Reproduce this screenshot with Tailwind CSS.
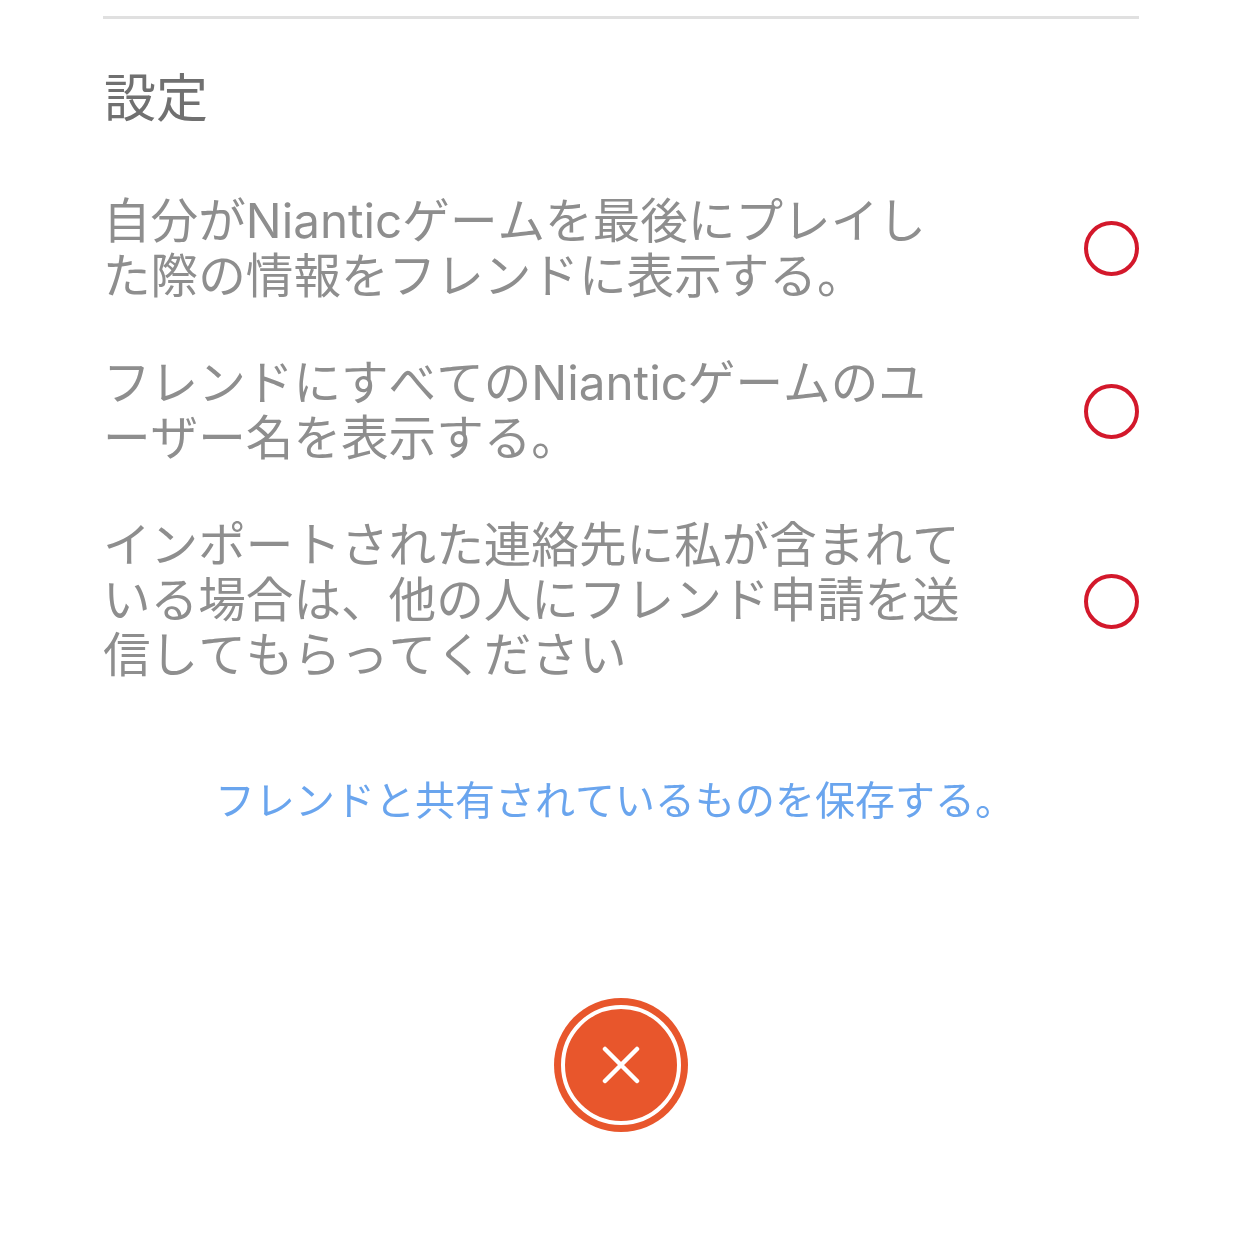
<!DOCTYPE html>
<html lang="ja">
<head>
  <meta charset="UTF-8">
  <title>設定</title>
  <script src="https://cdn.jsdelivr.net/npm/@tailwindcss/browser@4"></script>
</head>
<body class="bg-white font-['Inter','Noto_Sans_CJK_JP',sans-serif] [font-kerning:none]">
  <div class="w-[1242px] h-[1256px] overflow-hidden flex flex-col items-center blur-[0.6px]">
    <div class="mt-4 w-[1036px] h-[3px] bg-[#e0e0e0]"></div>

    <div class="w-[1036px] mt-[50px] pl-[1px] text-[52px] leading-[60px] text-[#707070]">設定</div>

    <!-- Settings rows -->
    <div class="w-[1036px] mt-[64px] flex flex-col gap-[53px] text-[#8e8e8e] text-[47.6px] leading-[55px]">
      <div class="flex items-center justify-between">
        <p class="w-[900px]">自分がNianticゲームを最後にプレイし<br>た際の情報をフレンドに表示する。</p>
        <div class="w-[55px] h-[55px] rounded-full border-[4px] border-[#d3182b]"></div>
      </div>
      <div class="flex items-center justify-between">
        <p class="w-[900px] -mt-[1px] mb-[1px]">フレンドにすべてのNianticゲームのユ<br>ーザー名を表示する。</p>
        <div class="w-[55px] h-[55px] rounded-full border-[4px] border-[#d3182b]"></div>
      </div>
      <div class="flex items-center justify-between">
        <p class="w-[900px] -mt-[2px] mb-[2px]">インポートされた連絡先に私が含まれて<br>いる場合は、他の人にフレンド申請を送<br>信してもらってください</p>
        <div class="w-[55px] h-[55px] rounded-full border-[4px] border-[#d3182b]"></div>
      </div>
    </div>

    <div class="mt-[92px] mr-[12px] text-[40px] leading-[50px] text-[#6aa5ee]">フレンドと共有されているものを保存する。</div>

    <!-- Close button -->
    <div class="mt-[172px] w-[134px] h-[134px] rounded-full bg-[#e8562c] flex items-center justify-center">
      <div class="w-[120px] h-[120px] rounded-full border-[4px] border-white flex items-center justify-center">
        <svg width="38" height="38" viewBox="0 0 38 38" fill="none" stroke="white" stroke-width="4.5" stroke-linecap="round"><path d="M3 3L35 35M35 3L3 35"/></svg>
      </div>
    </div>
  </div>
</body>
</html>
